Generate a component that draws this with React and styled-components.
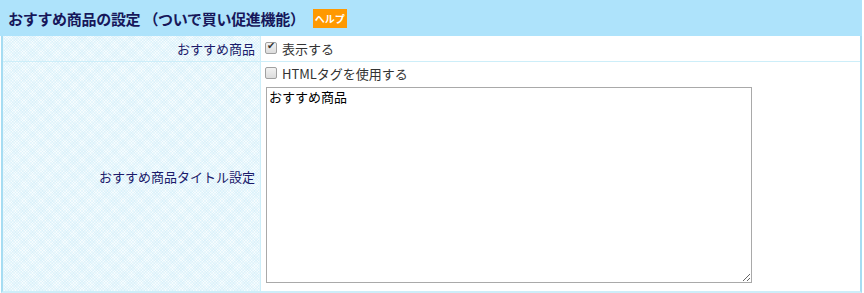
import styled, { createGlobalStyle } from "styled-components";

const GlobalStyle = createGlobalStyle`
  body {
    margin: 0;
    background: #ffffff;
    font-family: "Noto Sans CJK JP", "Noto Sans", sans-serif;
  }
`;

const Panel = styled.section`
  width: 862px;
`;

const Header = styled.div`
  display: flex;
  align-items: center;
  gap: 8px;
  height: 36px;
  padding: 0 8px;
  background: #aee3fb;
  box-sizing: border-box;
`;

const Title = styled.h2`
  margin: 0;
  font-size: 15px;
  font-weight: 700;
  color: #17175a;
  letter-spacing: -0.3px;
`;

const HelpBadge = styled.span`
  display: inline-flex;
  align-items: center;
  justify-content: center;
  height: 19px;
  padding: 0 2px;
  background: #ff9900;
  color: #ffffff;
  font-size: 10px;
  font-weight: 700;
`;

const Table = styled.div`
  display: grid;
  grid-template-columns: 258px 1fr;
  border-left: 2px solid #a6dcf2;
  border-right: 2px solid #a6dcf2;
  border-bottom: 2px solid #cdeef9;
  margin-left: 1px;
`;

const LabelCell = styled.div`
  display: flex;
  align-items: center;
  justify-content: flex-end;
  padding: 0 5px 0 0;
  font-size: 13px;
  color: #1b1b6b;
  border-right: 1px solid #cdeef9;
  border-top: ${(p) => (p.$first ? "none" : "1px solid #cdeef9")};
  background-color: #f6fcfe;
  background-image: repeating-linear-gradient(
      45deg,
      rgba(190, 230, 246, 0.28) 0 1px,
      transparent 1px 2px
    ),
    repeating-linear-gradient(
      -45deg,
      rgba(190, 230, 246, 0.28) 0 1px,
      transparent 1px 2px
    );
`;

const ValueCell = styled.div`
  display: flex;
  flex-direction: column;
  gap: 2px;
  padding: ${(p) => (p.$tall ? "2px 5px 8px" : "3px 5px")};
  border-top: ${(p) => (p.$first ? "none" : "1px solid #cdeef9")};
  background: #ffffff;
`;

const CheckRow = styled.label`
  display: flex;
  align-items: center;
  gap: 5px;
  height: 18px;
  font-size: 13px;
  color: #333333;
`;

const Check = styled.input`
  appearance: none;
  position: relative;
  width: 12px;
  height: 12px;
  margin: 0 0 0 -1px;
  border: 1px solid #a0a0a0;
  border-radius: 2px;
  background: linear-gradient(#f2f2f2, #dcdcdc);

  &:checked::after {
    content: "✔";
    position: absolute;
    left: 1px;
    top: -3px;
    font-size: 10px;
    color: #333333;
  }
`;

const TextArea = styled.textarea`
  width: 486px;
  height: 196px;
  box-sizing: border-box;
  margin: 3px 0 0 0;
  padding: 1px 2px;
  border: 1px solid #a9a9a9;
  font-family: "Noto Sans CJK JP", "Noto Sans", sans-serif;
  font-size: 13px;
  line-height: 1.2;
  color: #000000;
  resize: both;
  outline: none;
`;

export default function App() {
  return (
    <>
      <GlobalStyle />
      <Panel>
        <Header>
          <Title>おすすめ商品の設定 （ついで買い促進機能）</Title>
          <HelpBadge>ヘルプ</HelpBadge>
        </Header>
        <Table>
          <LabelCell $first style={{ height: 25 }}>
            おすすめ商品
          </LabelCell>
          <ValueCell $first>
            <CheckRow>
              <Check type="checkbox" defaultChecked />
              表示する
            </CheckRow>
          </ValueCell>
          <LabelCell>おすすめ商品タイトル設定</LabelCell>
          <ValueCell $tall>
            <CheckRow>
              <Check type="checkbox" />
              HTMLタグを使用する
            </CheckRow>
            <TextArea defaultValue="おすすめ商品" />
          </ValueCell>
        </Table>
      </Panel>
    </>
  );
}
